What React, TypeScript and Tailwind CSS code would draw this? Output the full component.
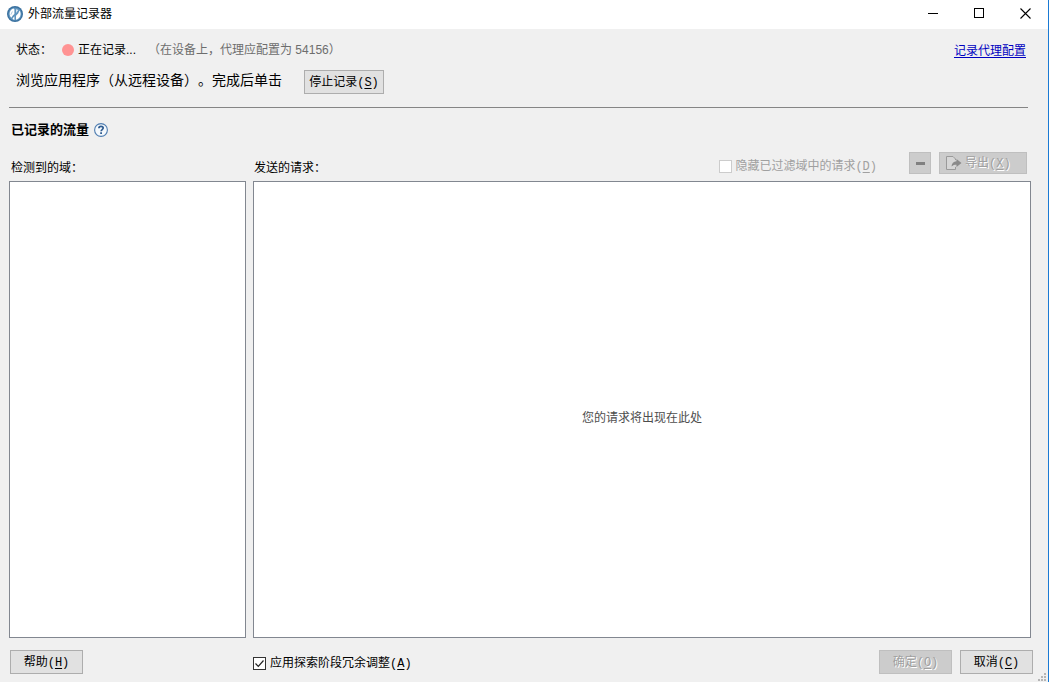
import React from "react";

type KeyProps = { letter: string };

// Access key shown after a label, e.g. (S)
const AccessKey = ({ letter }: KeyProps) => (
  <span className="font-['Liberation_Mono',monospace]">
    (<span className="underline underline-offset-2">{letter}</span>)
  </span>
);

const TitleBar = () => {
  return (
    <header className="flex h-[29px] items-center bg-white pb-[2px] pl-[7px]">
      <svg width="16" height="16" viewBox="0 0 16 16" className="shrink-0">
        <circle cx="8" cy="8" r="8" fill="#3a719f" />
        <circle cx="8" cy="8" r="6.600" fill="#5e93bd" />
        <path
          d="M6.300 2.500C4 3.300 2.500 5.500 2.600 8c.1 1.500.7 2.800 1.700 3.700L5.800 9.500 7.400 8V3.200zM5.500 12.500l1.900-2.300v3.700c-.7-.2-1.300-.7-1.900-1.400zM9 9.800l2.200-2.300 1.300-3c1.200 1.700 1.500 3.700.7 5.700-.8 1.900-2.300 3.100-4.200 3.500z"
          fill="#ffffff"
        />
        <path d="M9 3.200c.9.100 1.700.5 2.200 1L9 7z" fill="#d5e4f0" />
        <path d="m3.800 8.800 1.600-3.300" stroke="#9dbfdb" strokeWidth="0.8" />
      </svg>
      <h1 className="ml-[5px] flex-1 text-xs">外部流量记录器</h1>
      <button type="button" aria-label="最小化" className="flex h-full w-[46px] items-center justify-center">
        <svg width="11" height="11" viewBox="0 0 11 11" stroke="#000" shapeRendering="crispEdges">
          <path d="M0 5.500h10" />
        </svg>
      </button>
      <button type="button" aria-label="最大化" className="flex h-full w-[46px] items-center justify-center">
        <svg width="11" height="11" viewBox="0 0 11 11" fill="none" stroke="#000" shapeRendering="crispEdges">
          <path d="M.5.5h9v9h-9z" />
        </svg>
      </button>
      <button type="button" aria-label="关闭" className="flex h-full w-[46px] items-center justify-center">
        <svg width="11" height="11" viewBox="0 0 11 11" stroke="#000" strokeWidth="1.1">
          <path d="m.5.5 10 10M10.500.5l-10 10" />
        </svg>
      </button>
    </header>
  );
};

const Status = () => {
  return (
    <section className="border-b border-[#858585] pt-[10px] pb-[13px] pl-[7px] mr-[3px]">
      <div className="flex items-center text-xs leading-5">
        <span>状态：</span>
        <span className="ml-[10px] size-3 rounded-full bg-[#ff9393]" />
        <span className="ml-1">正在记录...</span>
        <span className="ml-3 text-[#6d6d6d]">（在设备上，代理应配置为 54156）</span>
        <a href="#proxy" className="ml-auto mr-[2px] pt-[2px] text-[#0000c0] underline underline-offset-2">
          记录代理配置
        </a>
      </div>
      <div className="mt-[9px] flex items-start">
        <p className="text-sm leading-5">浏览应用程序（从远程设备）。完成后单击</p>
        <button type="button" className="ml-[22px] h-6 w-20 border border-[#adadad] bg-[#e1e1e1] text-xs">
          停止记录
          <AccessKey letter="S" />
        </button>
      </div>
    </section>
  );
};

const Traffic = () => {
  return (
    <section className="flex flex-1 flex-col pt-3">
      <div className="flex items-center gap-[5px] pl-[2px]">
        <h2 className="text-[13px] font-bold leading-5">已记录的流量</h2>
        <button type="button" aria-label="帮助信息">
          <svg width="14" height="14" viewBox="0 0 14 14" fill="none">
            <circle cx="7" cy="7" r="6.400" fill="#f4f8fc" stroke="#4f7db0" strokeWidth="1.100" />
            <path d="M4.900 5.300c0-1.300.9-2 2.100-2s2.200.7 2.200 1.800c0 1.500-2.100 1.500-2.100 3.200" stroke="#2f5c90" strokeWidth="1.700" />
            <path d="M6.200 9.300H8V11H6.200z" fill="#2f5c90" />
          </svg>
        </button>
      </div>
      <div className="mt-3 grid flex-1 grid-cols-[237px_1fr] grid-rows-[auto_1fr] gap-x-[7px] text-xs">
        <h3 className="self-end pb-[3px] pl-[2px] leading-5">检测到的域：</h3>
        <div className="flex h-[29px] items-end pl-px pr-1">
          <h3 className="pb-[3px] leading-5">发送的请求：</h3>
          <label className="ml-auto flex items-center gap-[3px] pb-1 leading-5 text-[#a0a0a0]">
            <input type="checkbox" disabled className="size-[13px] appearance-none border border-[#cccccc] bg-white" />
            <span>
              隐藏已过滤域中的请求
              <AccessKey letter="D" />
            </span>
          </label>
          <button
            type="button"
            disabled
            aria-label="删除"
            className="ml-8 flex h-[22px] w-[22px] items-center justify-center self-start border border-[#bfbfbf] bg-[#cccccc]"
          >
            <span className="h-[3px] w-[9px] bg-[#808080]" />
          </button>
          <button
            type="button"
            disabled
            className="ml-2 flex h-[22px] w-[88px] items-center gap-[3px] self-start border border-[#bfbfbf] bg-[#cccccc] pl-[6px] text-[#a0a0a0] [text-shadow:1px_1px_#fff]"
          >
            <svg width="16" height="14" viewBox="0 0 16 14" fill="none">
              <path d="M9.500 4V3L7 .5H.5v13h9V11" fill="#d6d6d6" stroke="#9a9a9a" />
              <path d="M10.500 3 15.500 7l-5 4V8.700c-2 0-3.500.3-5 1.800C5.700 7.500 7.500 5.400 10.500 5.300z" fill="#8a8a8a" />
            </svg>
            <span>
              导出
              <AccessKey letter="X" />
            </span>
          </button>
        </div>
        <div className="border border-[#828790] bg-white" />
        <div className="flex items-center justify-center border border-[#828790] bg-white pt-[17px] text-[#4d4d4d]">
          您的请求将出现在此处
        </div>
      </div>
    </section>
  );
};

const Footer = () => {
  return (
    <footer className="relative grid grid-cols-[237px_1fr] gap-x-[7px] pt-3 pb-2 text-xs">
      <button type="button" className="ml-px h-6 w-[73px] border border-[#adadad] bg-[#e1e1e1]">
        帮助
        <AccessKey letter="H" />
      </button>
      <div className="-mr-[2px] flex items-center gap-2">
        <label className="mr-auto flex items-center gap-1 pt-[2px]">
          <span className="grid">
            <input
              type="checkbox"
              defaultChecked
              className="peer col-start-1 row-start-1 size-[13px] appearance-none border border-[#333333] bg-white"
            />
            <svg
              width="13"
              height="13"
              viewBox="0 0 13 13"
              fill="none"
              stroke="#222"
              strokeWidth="1.200"
              className="pointer-events-none invisible col-start-1 row-start-1 peer-checked:visible"
            >
              <path d="m2.500 6.500 2.800 2.800 5.200-5.800" />
            </svg>
          </span>
          <span>
            应用探索阶段冗余调整
            <AccessKey letter="A" />
          </span>
        </label>
        <button
          type="button"
          disabled
          className="h-6 w-[73px] border border-[#bfbfbf] bg-[#cccccc] text-[#a0a0a0] [text-shadow:1px_1px_#fff]"
        >
          确定
          <AccessKey letter="O" />
        </button>
        <button type="button" className="h-6 w-[73px] border border-[#adadad] bg-[#e1e1e1]">
          取消
          <AccessKey letter="C" />
        </button>
      </div>
      {/* resize grip */}
      <svg width="9" height="9" viewBox="0 0 9 9" fill="#b5b5b5" className="absolute -right-4 bottom-0">
        <path d="M6 0h2v2H6zM3 3h2v2H3zM6 3h2v2H6zM0 6h2v2H0zM3 6h2v2H3zM6 6h2v2H6z" />
      </svg>
    </footer>
  );
};

const App = () => {
  return (
    <div className="flex min-h-screen flex-col border-r border-[#1a7ad4] bg-[#f0f0f0] font-['Liberation_Sans','Noto_Sans_CJK_SC',sans-serif] text-black [text-spacing-trim:space-all]">
      <TitleBar />
      <main className="flex flex-1 flex-col pl-[9px] pr-[17px]">
        <Status />
        <Traffic />
        <Footer />
      </main>
    </div>
  );
};

export default App;
